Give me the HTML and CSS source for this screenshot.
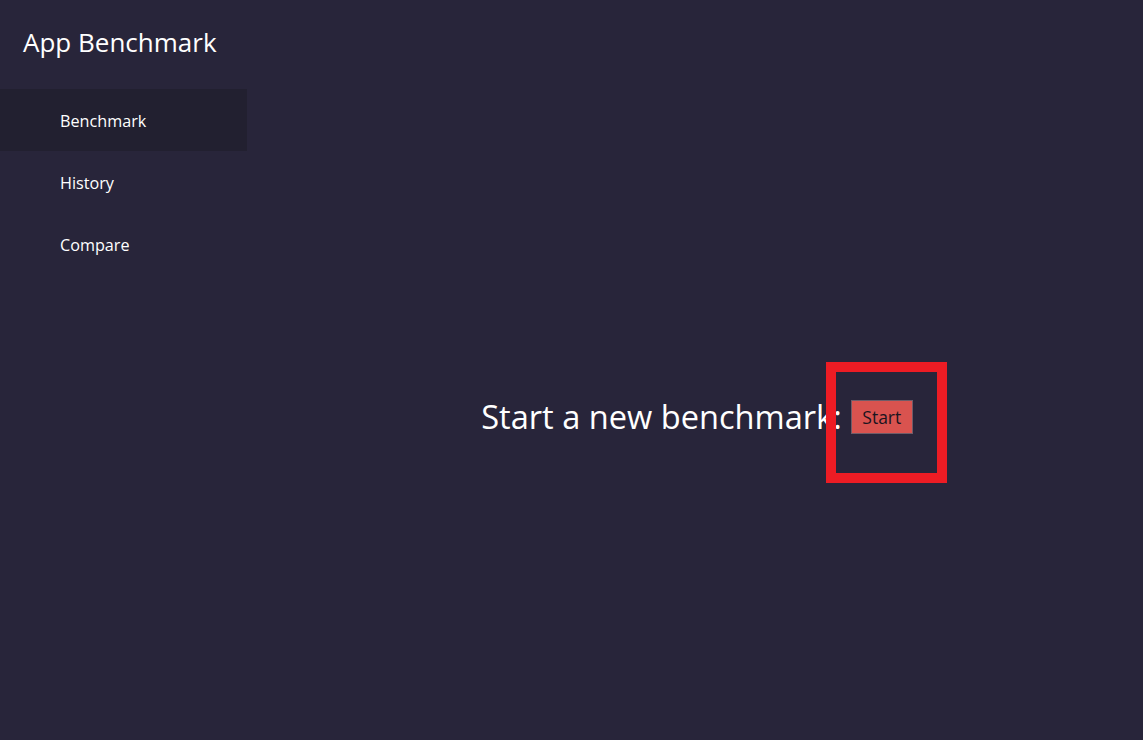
FILE: index.html
```html
<!DOCTYPE html>
<html>
<head>
<meta charset="utf-8">
<link rel="stylesheet" href="styles.css">
</head>
<body>
<div class="app">
  <nav class="sidebar">
    <div class="title">App Benchmark</div>
    <ul class="menu">
      <li class="item active">Benchmark</li>
      <li class="item">History</li>
      <li class="item">Compare</li>
    </ul>
  </nav>
  <main class="content">
    <div class="row">
      <span class="prompt">Start a new benchmark:</span>
      <button class="start">Start</button>
    </div>
  </main>
</div>
<div class="highlight"></div>
</body>
</html>
```
FILE: styles.css
```css
html, body {
  margin: 0;
  padding: 0;
  height: 100%;
}
body {
  background: #28253a;
  color: #ffffff;
  font-family: "Open Sans", "Noto Sans", sans-serif;
  overflow: hidden;
}
.app {
  display: flex;
  height: 740px;
}
.sidebar {
  width: 247px;
  flex: none;
}
.title {
  height: 89px;
  display: flex;
  align-items: center;
  padding-left: 23px;
  font-size: 26px;
  box-sizing: border-box;
  padding-bottom: 5px;
}
.menu {
  list-style: none;
  margin: 0;
  padding: 0;
}
.item {
  height: 62px;
  display: flex;
  align-items: center;
  padding-left: 60px;
  padding-top: 1px;
  box-sizing: border-box;
  font-size: 16.2px;
}
.item.active {
  background: #222030;
}
.content {
  flex: 1;
  display: flex;
  align-items: center;
  justify-content: center;
  padding-top: 93px;
  box-sizing: border-box;
}
.row {
  display: flex;
  align-items: center;
  gap: 9px;
  margin-left: 4px;
}
.prompt {
  font-size: 32.6px;
}
.start {
  width: 62px;
  height: 34px;
  background: #d9534f;
  border: 1px solid #6f5c68;
  color: #1a1520;
  font-family: "Open Sans", "Noto Sans", sans-serif;
  font-size: 17.5px;
  padding: 0;
  margin-top: 1px;
}
.highlight {
  position: absolute;
  left: 826px;
  top: 362px;
  width: 121px;
  height: 121px;
  box-sizing: border-box;
  border: 10px solid #ed1c24;
}
```
